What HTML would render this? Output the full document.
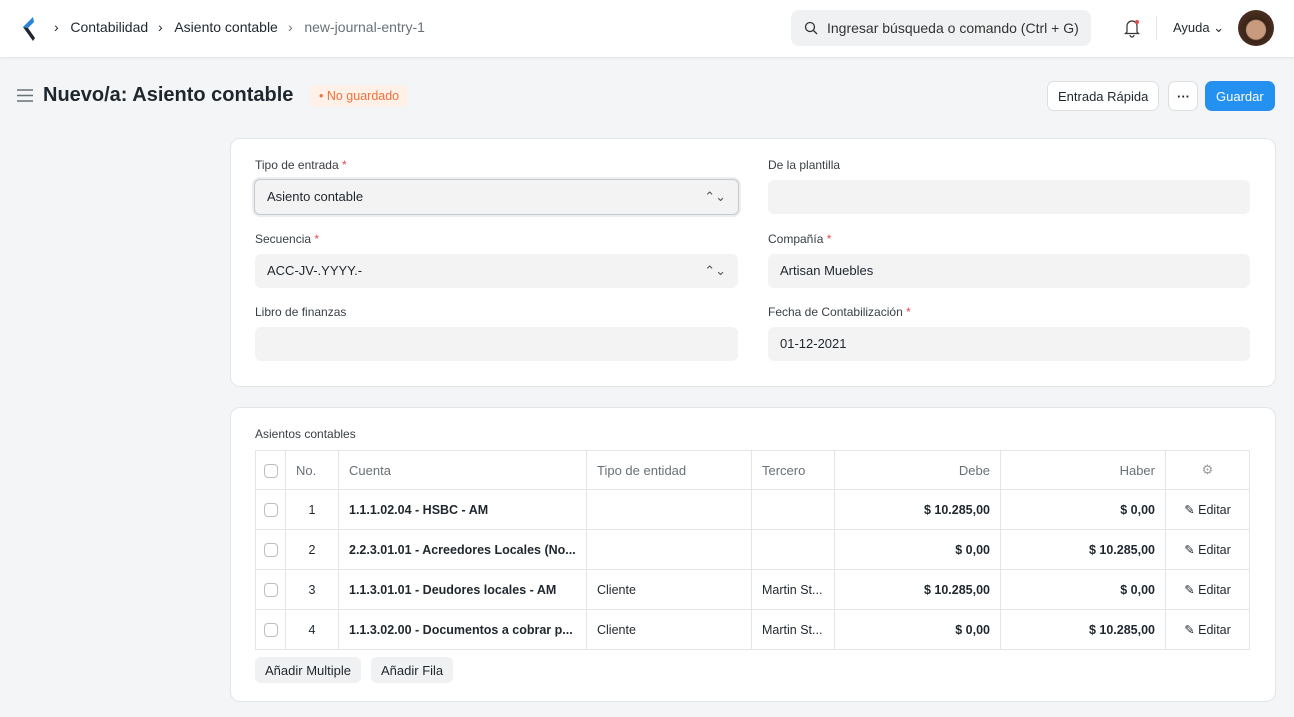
<!DOCTYPE html>
<html><head><meta charset="utf-8"><style>
*{box-sizing:border-box;margin:0;padding:0}
body{width:1294px;height:717px;overflow:hidden;background:#f4f5f6;font-family:"Liberation Sans",sans-serif;color:#1f272e;font-size:13px;position:relative}
.nav{position:absolute;left:0;top:0;width:1294px;height:58px;background:#fff;border-bottom:1px solid #e4e6e8;box-shadow:0 1px 2px rgba(0,0,0,.04)}
.abs{position:absolute}
.crumb{top:19px;font-size:14px;color:#1f272e}
.search{left:791px;top:10px;width:300px;height:36px;background:#f0f1f2;border-radius:8px}
.card{position:absolute;background:#fff;border:1px solid #e2e6e9;border-radius:10px}
.lbl{position:absolute;font-size:12px;color:#383f45}
.req{color:#e24c4c}
.inp{position:absolute;height:34px;background:#f3f3f4;border-radius:6px;padding:9px 12px;font-size:13px}
.btn{position:absolute;top:81px;height:30px;border:1px solid #dcdfe2;border-radius:7px;background:#fff;font-size:13px;padding:7px 10px}
table{position:absolute;left:255px;top:450px;width:994px;border-collapse:collapse;table-layout:fixed;border:1px solid #e2e6e9}
td{border:1px solid #e2e6e9;height:40px;padding:0 10px;font-size:12.5px;white-space:nowrap;overflow:hidden}
th{border:1px solid #e2e6e9;height:39px;padding:0 10px;font-weight:normal;color:#687178;text-align:left;font-size:13px}
.r{text-align:right}
.b{font-weight:bold}
.cb{display:inline-block;width:14px;height:14px;border:1px solid #b8bec3;border-radius:4px;vertical-align:middle}
.sm{position:absolute;top:657px;height:26px;background:#f0f1f2;border-radius:6px;padding:6px 10px;font-size:13px}
</style></head><body>
<div class="nav">
<svg class="abs" style="left:20px;top:16px" width="16" height="26" viewBox="0 0 16 26"><path d="M13 1 L3 11 L8 12 L14 6Z" fill="#2a86d4"/><path d="M3 11 L13 25 L15 22 L8 12Z" fill="#1f272e"/></svg>
<div class="abs crumb" style="left:54px">›&nbsp;&nbsp;&nbsp;Contabilidad</div>
<div class="abs crumb" style="left:158px">›&nbsp;&nbsp;&nbsp;Asiento contable</div>
<div class="abs crumb" style="left:288px;color:#687178">›&nbsp;&nbsp;&nbsp;new-journal-entry-1</div>
<div class="abs search"><svg class="abs" style="left:13px;top:11px" width="14" height="14" viewBox="0 0 14 14"><circle cx="6" cy="6" r="4.5" fill="none" stroke="#333" stroke-width="1.3"/><path d="M9.5 9.5 L13 13" stroke="#333" stroke-width="1.3"/></svg><span class="abs" style="left:36px;top:10px;font-size:14px;color:#333">Ingresar búsqueda o comando (Ctrl + G)</span></div>
<svg class="abs" style="left:1123px;top:18px" width="18" height="20" viewBox="0 0 18 20"><path d="M4 14 V8 a5 5 0 0 1 10 0 V14 L15.5 15.5 H2.5Z M7 17 a2 2 0 0 0 4 0" fill="none" stroke="#333" stroke-width="1.2"/><circle cx="14" cy="4" r="2" fill="#e24c4c"/></svg>
<div class="abs" style="left:1156px;top:16px;width:1px;height:24px;background:#e2e6e9"></div>
<div class="abs" style="left:1173px;top:20px;font-size:13px">Ayuda ⌄</div>
<div class="abs" style="left:1238px;top:10px;width:36px;height:36px;border-radius:50%;background:radial-gradient(circle at 50% 55%,#c89a7e 0 35%,#3a2418 40%,#5a3a2a 100%)"></div>
</div>
<svg class="abs" style="left:17px;top:89px" width="16" height="13" viewBox="0 0 16 13"><path d="M0 1H16M0 6.5H16M0 12H16" stroke="#687178" stroke-width="1.5"/></svg>
<div class="abs" style="left:43px;top:84px;font-size:20px;font-weight:bold">Nuevo/a: Asiento contable</div>
<div class="abs" style="left:310px;top:85px;height:22px;background:#fff0e8;border-radius:6px;padding:4px 9px;font-size:12.5px;color:#f0713c">• No guardado</div>
<div class="btn" style="left:1047px">Entrada Rápida</div>
<div class="btn" style="left:1168px;width:30px;padding:7px 8px;font-weight:bold">···</div>
<div class="btn" style="left:1205px;width:70px;background:#2490ef;border-color:#2490ef;color:#fff">Guardar</div>

<div class="card" style="left:230px;top:138px;width:1046px;height:249px"></div>
<div class="lbl" style="left:255px;top:158px">Tipo de entrada <span class="req">*</span></div>
<div class="inp" style="left:254px;top:179px;width:485px;height:36px;border:1px solid #c4c9cd;background:#f3f3f4;box-shadow:0 0 0 2px #eceef0">Asiento contable<span style="float:right;color:#555">⌃⌄</span></div>
<div class="lbl" style="left:768px;top:158px">De la plantilla</div>
<div class="inp" style="left:768px;top:180px;width:482px"></div>
<div class="lbl" style="left:255px;top:232px">Secuencia <span class="req">*</span></div>
<div class="inp" style="left:255px;top:254px;width:483px">ACC-JV-.YYYY.-<span style="float:right;color:#555">⌃⌄</span></div>
<div class="lbl" style="left:768px;top:232px">Compañía <span class="req">*</span></div>
<div class="inp" style="left:768px;top:254px;width:482px">Artisan Muebles</div>
<div class="lbl" style="left:255px;top:305px">Libro de finanzas</div>
<div class="inp" style="left:255px;top:327px;width:483px"></div>
<div class="lbl" style="left:768px;top:305px">Fecha de Contabilización <span class="req">*</span></div>
<div class="inp" style="left:768px;top:327px;width:482px">01-12-2021</div>

<div class="card" style="left:230px;top:407px;width:1046px;height:295px"></div>
<div class="lbl" style="left:255px;top:427px">Asientos contables</div>
<table>
<colgroup><col style="width:30px"><col style="width:53px"><col style="width:248px"><col style="width:165px"><col style="width:83px"><col style="width:166px"><col style="width:165px"><col style="width:84px"></colgroup>
<tr><th style="padding:0 8px"><span class="cb"></span></th><th>No.</th><th>Cuenta</th><th>Tipo de entidad</th><th>Tercero</th><th class="r">Debe</th><th class="r">Haber</th><th style="text-align:center;color:#999">⚙</th></tr>
<tr><td style="padding:0 8px"><span class="cb"></span></td><td style="text-align:center">1</td><td class="b">1.1.1.02.04 - HSBC - AM</td><td></td><td></td><td class="r b">$ 10.285,00</td><td class="r b">$ 0,00</td><td style="text-align:center">✎ Editar</td></tr>
<tr><td style="padding:0 8px"><span class="cb"></span></td><td style="text-align:center">2</td><td class="b">2.2.3.01.01 - Acreedores Locales (No...</td><td></td><td></td><td class="r b">$ 0,00</td><td class="r b">$ 10.285,00</td><td style="text-align:center">✎ Editar</td></tr>
<tr><td style="padding:0 8px"><span class="cb"></span></td><td style="text-align:center">3</td><td class="b">1.1.3.01.01 - Deudores locales - AM</td><td>Cliente</td><td>Martin St...</td><td class="r b">$ 10.285,00</td><td class="r b">$ 0,00</td><td style="text-align:center">✎ Editar</td></tr>
<tr><td style="padding:0 8px"><span class="cb"></span></td><td style="text-align:center">4</td><td class="b">1.1.3.02.00 - Documentos a cobrar p...</td><td>Cliente</td><td>Martin St...</td><td class="r b">$ 0,00</td><td class="r b">$ 10.285,00</td><td style="text-align:center">✎ Editar</td></tr>
</table>
<div class="sm" style="left:255px">Añadir Multiple</div>
<div class="sm" style="left:371px">Añadir Fila</div>
</body></html>
